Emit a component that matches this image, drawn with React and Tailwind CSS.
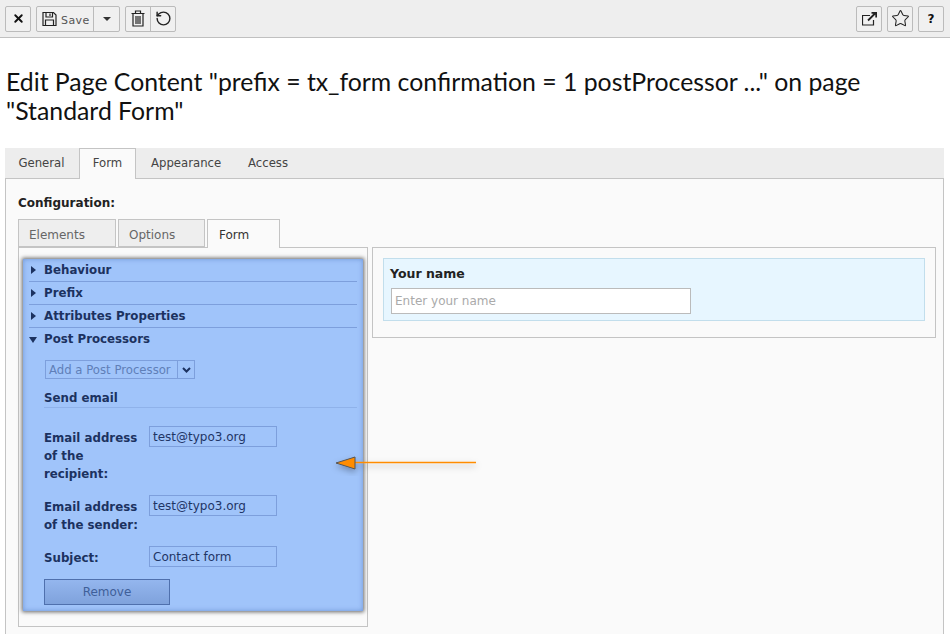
import { X, RotateCcw, Star } from 'lucide-react'

const verdana = "font-['DejaVu_Sans',Verdana,sans-serif]"

function ToolBtn({ children, className = '' }) {
  return (
    <div className={`h-[26px] flex items-center justify-center bg-[#f0f0f0] border border-[#bbbbbb] rounded-[2px] ${className}`}>
      {children}
    </div>
  )
}

function Section({ title, open }) {
  return (
    <div className={`h-[23px] flex items-center gap-[7px] ${open ? '' : 'border-b border-[#7d9fdc]'}`}>
      {open ? (
        <span className="w-0 h-0 border-x-[4px] border-x-transparent border-t-[6px] border-t-[#1c3260]" />
      ) : (
        <span className="w-0 h-0 ml-[2px] mr-[1px] border-y-[4px] border-y-transparent border-l-[5px] border-l-[#1c3260]" />
      )}
      <span className={`text-[11.8px] font-bold text-[#1c3260] ${open ? '' : 'pt-[2px]'}`}>{title}</span>
    </div>
  )
}

function Field({ label, value, className = '' }) {
  return (
    <div className={`flex ${className}`}>
      <div className="w-[105px] pt-[3px] text-[11.8px] leading-[18px] font-bold text-[#1c3260]">{label}</div>
      <div className="w-[128px] h-[21px] px-[3px] flex items-center border border-[#7d9fdc] text-[12px] text-[#1f3566]">{value}</div>
    </div>
  )
}

export default function App() {
  return (
    <div className={`relative w-[950px] h-[634px] overflow-hidden bg-white ${verdana}`}>
      {/* Toolbar */}
      <div className="h-[38px] px-[5px] flex items-center justify-between bg-[#eeeeee] border-b border-[#c0c0c0]">
        <div className="flex items-center gap-[5px]">
          <ToolBtn className="w-[26px]"><X size={13} strokeWidth={3.5} className="text-[#111]" /></ToolBtn>
          <div className="h-[26px] flex items-center bg-[#f0f0f0] border border-[#bbbbbb] rounded-[2px]">
            <div className="h-full w-[57px] pl-[5px] flex items-center gap-[4px] border-r border-[#bbbbbb]">
              <svg width="15" height="16" viewBox="0 0 15 16" fill="none" stroke="#222" strokeWidth="1.2">
                <path d="M1 1.5h10.5l2.5 2.5v10.5H1z" />
                <path d="M4 1.5v4.5h6.5V1.5M8 2.5v2.5M3.5 14.5V9h8v5.5" />
              </svg>
              <span className="text-[11px] leading-[24px] pt-[4px] tracking-[0.4px] text-[#555]">Save</span>
            </div>
            <div className="w-[25px] flex justify-center">
              <span className="w-0 h-0 border-x-[4px] border-x-transparent border-t-[4px] border-t-[#333]" />
            </div>
          </div>
          <div className="h-[26px] flex items-center bg-[#f0f0f0] border border-[#bbbbbb] rounded-[2px]">
            <div className="h-full w-[25px] flex items-center justify-center border-r border-[#bbbbbb]">
              <svg width="14" height="17" viewBox="0 0 14 17" fill="none" stroke="#222" strokeWidth="1.2">
                <path d="M0.5 3.5h13M4.5 3.5V1h5v2.5M2 3.5v12.5h10V3.5M5 6v8M7 6v8M9 6v8" />
              </svg>
            </div>
            <div className="w-[24px] flex justify-center">
              <RotateCcw size={17} strokeWidth={2} className="text-[#222]" />
            </div>
          </div>
        </div>
        <div className="flex items-center gap-[5px] pr-[1px]">
          <ToolBtn className="w-[26px]">
            <svg width="15" height="14" viewBox="0 0 15 14" fill="none" stroke="#222">
              <path d="M8 3.5H0.5v9.5h11V8" strokeWidth="1.2" />
              <path d="M6 8.5l7-7M9.5 0.8h4.7v4.7" strokeWidth="1.8" />
            </svg>
          </ToolBtn>
          <ToolBtn className="w-[26px]"><Star size={19} strokeWidth={1.3} className="text-[#222]" /></ToolBtn>
          <ToolBtn className="w-[26px]"><span className="text-[12px] font-bold text-[#111]">?</span></ToolBtn>
        </div>
      </div>

      {/* Title */}
      <h1 className="mt-[29px] mb-[23px] ml-[6px] w-[900px] font-['Lato',sans-serif] text-[24.8px] leading-[29px] text-[#111]">
        Edit Page Content "prefix = tx_form confirmation = 1 postProcessor ..." on page "Standard Form"
      </h1>

      {/* Main tabs */}
      <div className="mx-[5px] w-[939px] h-[31px] flex bg-[#ededed] border-b border-[#c4c4c4] text-[11.7px] leading-[18px] text-[#444]">
        <div className="w-[74px] pt-[6px] pr-[1px] text-center">General</div>
        <div className="w-[57px] h-[31px] pt-[5px] text-center bg-[#fafafa] border border-b-0 border-[#c4c4c4]">Form</div>
        <div className="w-[97px] pt-[6px] pl-[15px]">Appearance</div>
        <div className="w-[60px] pt-[6px] pl-[15px]">Access</div>
      </div>

      {/* Panel */}
      <div className="mx-[5px] w-[939px] h-[460px] px-[12px] bg-[#fafafa] border-x border-[#c4c4c4]">
        <div className="pt-[15px] h-[40px] text-[12px] font-bold text-[#222]">Configuration:</div>

        <div className="flex gap-[2px] h-[28px] w-[350px] text-[12px] text-[#666]">
          <div className="w-[98px] pt-[6px] pl-[10px] bg-[#eeeeee] border border-[#c4c4c4]">Elements</div>
          <div className="w-[87px] pt-[6px] pl-[10px] bg-[#eeeeee] border border-[#c4c4c4]">Options</div>
          <div className="w-[73px] h-[29px] pt-[6px] pl-[11px] bg-[#fafafa] border border-b-0 border-[#c4c4c4] text-[#333] relative z-10">Form</div>
        </div>

        <div className="flex gap-[4px] items-start">
          {/* Left column */}
          <div className="w-[350px] shrink-0 h-[380px] pt-[11px] px-[4px] border border-[#c4c4c4]">
            <div className="w-[340px] h-[352px] px-[6px] bg-[#a0c4fa] shadow-[0_0_4px_1px_rgba(0,0,0,0.6),inset_0_0_5px_rgba(40,80,160,0.4)]">
              <Section title="Behaviour" />
              <Section title="Prefix" />
              <Section title="Attributes Properties" />
              <Section title="Post Processors" open />

              <div className="ml-[16px] mt-[9px] w-[150px] h-[19px] flex border border-[#7d9fdc] text-[11.7px] text-[#5f7fb8]">
                <div className="flex-1 pl-[3px] leading-[18px] border-r border-[#7d9fdc] whitespace-nowrap">Add a Post Processor</div>
                <div className="w-[16px] flex items-center justify-center">
                  <svg width="9" height="6" viewBox="0 0 9 6"><path d="M1 1l3.5 3.5L8 1" fill="none" stroke="#1c3260" strokeWidth="2" /></svg>
                </div>
              </div>

              <div className="ml-[15px] mt-[11px] h-[18px] border-b border-[#8fb2ea] text-[11.8px] font-bold text-[#1c3260]">Send email</div>

              <div className="ml-[15px]">
                <Field className="mt-[18px] h-[52px]" label={<>Email address<br />of the<br />recipient:</>} value="test@typo3.org" />
                <Field className="mt-[17px] h-[34px]" label={<>Email address<br />of the sender:</>} value="test@typo3.org" />
                <Field className="mt-[17px] h-[21px]" label="Subject:" value="Contact form" />
                <div className="mt-[12px] w-[126px] h-[26px] flex items-center justify-center border border-[#4f70ad] bg-gradient-to-b from-[#94b6ee] to-[#7fa2dc] text-[12px] text-[#3f5f99]">Remove</div>
              </div>
            </div>
          </div>

          {/* Right column */}
          <div className="w-[564px] shrink-0 h-[91px] p-[10px] border border-[#c4c4c4]">
            <div className="h-[63px] pt-[8px] pl-[6px] bg-[#e7f6ff] border border-[#c2deec]">
              <div className="text-[12.5px] leading-[14px] font-bold text-[#222]">Your name</div>
              <div className="mt-[7px] ml-[1px] w-[300px] h-[26px] px-[3px] flex items-center bg-white border border-[#bbbbbb] text-[12px] text-[#aaaaaa]">Enter your name</div>
            </div>
          </div>
        </div>
      </div>

      {/* Arrow callout */}
      <svg className="absolute left-[330px] top-[450px]" width="155" height="26" viewBox="0 0 155 26">
        <defs>
          <filter id="arrowShadow" x="-20%" y="-100%" width="140%" height="300%">
            <feDropShadow dx="0" dy="3" stdDeviation="3" floodColor="#000" floodOpacity="0.3" />
          </filter>
        </defs>
        <g filter="url(#arrowShadow)">
          <path d="M25 12.5H146" stroke="#ff8c00" strokeWidth="1.5" fill="none" />
          <path d="M6 13L25 7V19Z" fill="#ff8c00" stroke="#555" strokeWidth="1" />
        </g>
      </svg>
    </div>
  )
}
